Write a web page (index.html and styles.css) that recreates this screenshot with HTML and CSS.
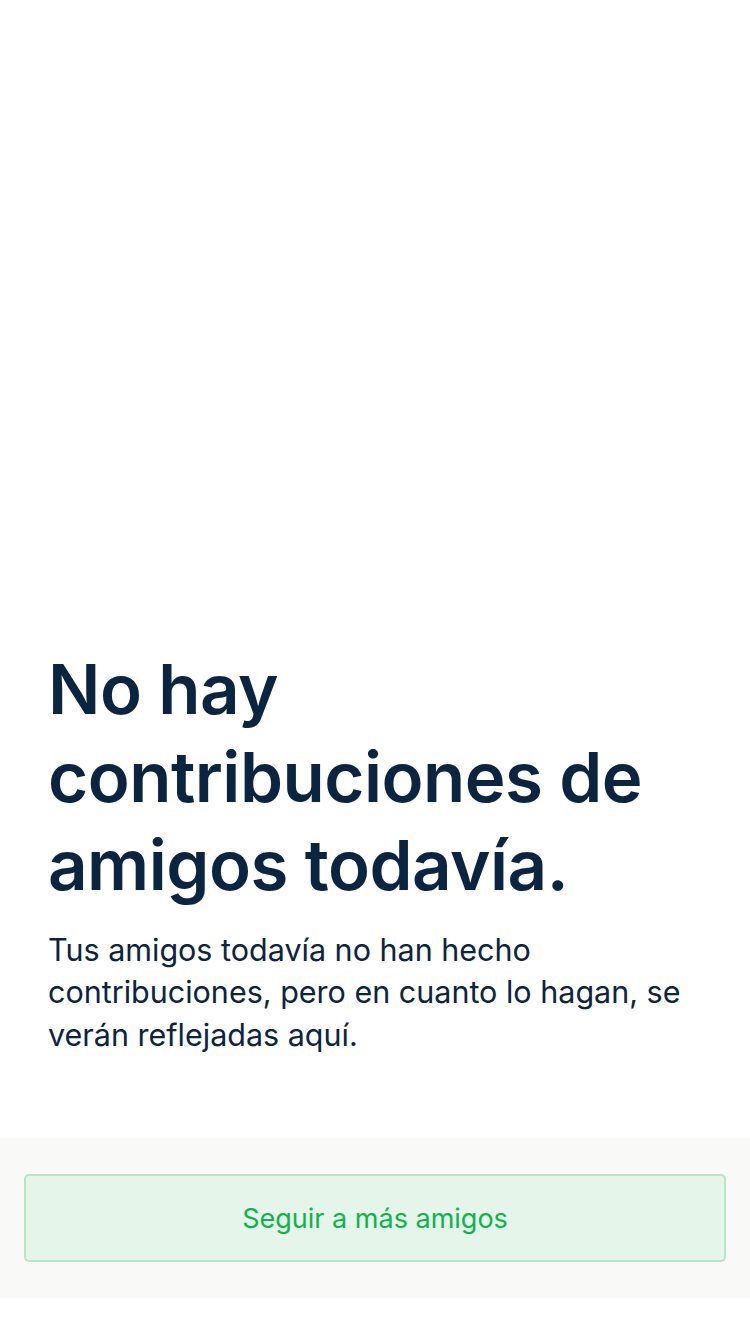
FILE: index.html
```html
<!DOCTYPE html>
<html lang="es">
<head>
<meta charset="utf-8">
<title>Contribuciones de amigos</title>
<link rel="stylesheet" href="styles.css">
</head>
<body>
<div class="screen">
  <main class="empty">
    <h1 class="empty-title">No hay contribuciones de amigos todavía.</h1>
    <p class="empty-text">Tus amigos todavía no han hecho contribuciones, pero en cuanto lo hagan, se verán reflejadas aquí.</p>
  </main>
  <footer class="action-bar">
    <button class="follow-btn" type="button">Seguir a más amigos</button>
  </footer>
  <div class="bottom-space"></div>
</div>
</body>
</html>
```

FILE: styles.css
```css
* { box-sizing: border-box; }
html, body { margin: 0; padding: 0; background: #ffffff; }
body { font-family: Inter, "Noto Sans", "Liberation Sans", sans-serif; color: #0b2440; }
.screen {
  width: 750px;
  height: 1334px;
  display: flex;
  flex-direction: column;
}
.empty {
  flex: 1;
  display: flex;
  flex-direction: column;
  justify-content: flex-end;
  padding: 0 40px 82px 48px;
}
.empty-title {
  margin: 0 0 20px 0;
  font-size: 69px;
  line-height: 88px;
  font-weight: 600;
  letter-spacing: -0.5px;
  color: #0b2440;
}
.empty-text {
  margin: 0;
  font-size: 30.5px;
  line-height: 42.5px;
  font-weight: 400;
  color: #0b2440;
}
.action-bar {
  height: 160px;
  background: #f9f9f7;
  padding: 36px 24px;
  display: flex;
}
.follow-btn {
  flex: 1;
  height: 88px;
  background: #e5f5ea;
  border: 2px solid #b6e6c4;
  border-radius: 5px;
  font-family: inherit;
  font-size: 27px;
  color: #10b24b;
  cursor: pointer;
}
.bottom-space { height: 36px; }
```
